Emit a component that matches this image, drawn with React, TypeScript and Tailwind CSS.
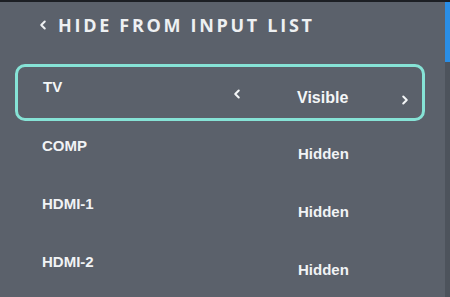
import React from 'react';
import { ChevronLeft, ChevronRight } from 'lucide-react';

interface InputRow {
  name: string;
  status: string;
}

const rows: InputRow[] = [
  { name: 'COMP', status: 'Hidden' },
  { name: 'HDMI-1', status: 'Hidden' },
  { name: 'HDMI-2', status: 'Hidden' },
];

const App: React.FC = () => {
  return (
    <div
      className="w-[450px] h-[297px] overflow-hidden bg-[#5b616b] flex border-t-2 border-[#1c1f24]"
      style={{ fontFamily: '"Liberation Sans", Arial, sans-serif' }}
    >
      <div className="flex-1 flex flex-col">
        <div className="flex items-center h-[42px] pl-[36px] pt-[4px] text-[#eef0f2]">
          <ChevronLeft className="h-[14px] w-[14px] mr-[8px]" strokeWidth={3.5} />
          <span
            className="text-[18px] font-bold tracking-[0.15em]"
            style={{ fontFamily: '"Open Sans", sans-serif' }}
          >
            HIDE FROM INPUT LIST
          </span>
        </div>

        <div className="mt-[20px] ml-[15px] w-[410px] h-[57px] rounded-[10px] border-[3px] border-[#86e3d6] flex items-center text-[#f4f6f7] font-bold text-[15px]">
          <span className="pl-[25px] -mt-[10px] w-[212px]">TV</span>
          <ChevronLeft className="h-[14px] w-[14px] mt-[2px]" strokeWidth={3.5} />
          <span className="ml-[53px] w-[101px] text-[16px] mt-[10px]">Visible</span>
          <ChevronRight className="h-[14px] w-[14px] mt-[14px]" strokeWidth={3.5} />
        </div>

        <div className="flex flex-col">
          {rows.map((row) => (
            <div key={row.name} className="flex h-[58px] text-[#f1f3f5] font-bold text-[15px]">
              <span className="pl-[42px] pt-[14px] w-[298px]">{row.name}</span>
              <span className="pt-[22px]">{row.status}</span>
            </div>
          ))}
        </div>
      </div>
      <div className="w-[5px] flex flex-col">
        <div className="h-[60px] bg-[#2a8ee6]" />
        <div className="flex-1 bg-[#4d535c]" />
      </div>
    </div>
  );
};

export default App;
